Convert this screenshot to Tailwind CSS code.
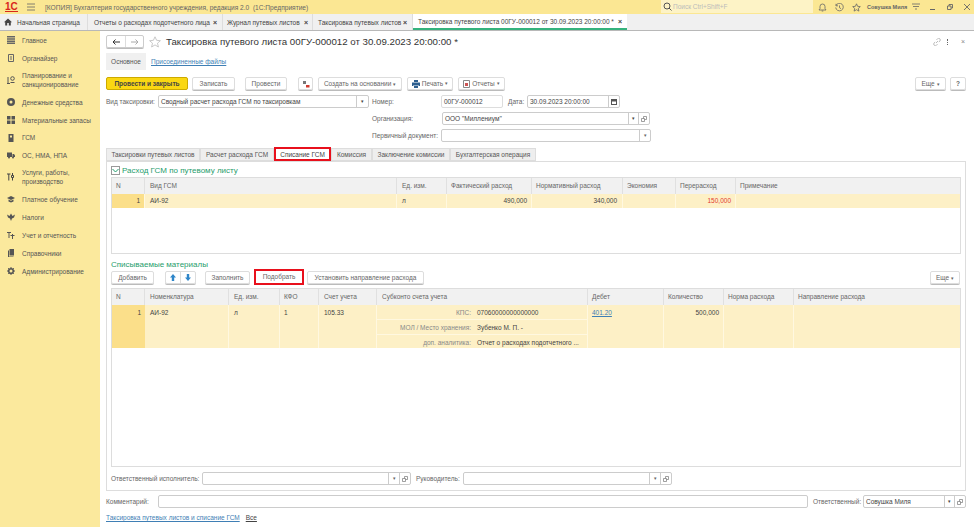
<!DOCTYPE html>
<html lang="ru">
<head>
<meta charset="UTF-8">
<title>Таксировка путевого листа</title>
<script src="https://cdn.jsdelivr.net/npm/@tailwindcss/browser@4"></script>
</head>
<body class="w-[974px] h-[527px] overflow-hidden bg-white font-['Liberation_Sans',sans-serif] text-[6.5px] leading-[9px] whitespace-nowrap text-[#555]">

<!-- title bar -->
<header class="h-[14px] bg-[#fbe793] flex items-center relative">
  <span class="ml-[5px] w-[13px] text-[10px] font-bold text-[#d8261c] border-b border-[#d8261c] leading-[9px]">1С</span>
  <svg class="ml-[9px] w-[8px] h-[8px]" viewBox="0 0 8 8" stroke="#666" stroke-width="0.8"><path d="M0 1h8M0 4h8M0 7h8"/></svg>
  <span class="ml-[10px] text-[6.600px] text-[#666]">[КОПИЯ] Бухгалтерия государственного учреждения, редакция 2.0&nbsp; (1С:Предприятие)</span>
  <div class="absolute left-[661px] top-0 w-[152px] h-[13px] bg-[#fdf3c6] flex items-center pl-[2px] text-[#bbb]">
    <svg class="w-[9px] h-[9px] mr-[1px]" viewBox="0 0 9 9" fill="none" stroke="#555" stroke-width="1"><circle cx="4" cy="4" r="3"/><path d="M6 6l2.500 2.500"/></svg>
    Поиск Ctrl+Shift+F
  </div>
  <div class="absolute left-[818px] top-0 h-[14px] flex items-center">
    <svg class="w-[9px] h-[9px]" viewBox="0 0 9 9" fill="none" stroke="#666" stroke-width="0.8"><path d="M1 7h7L7 5.500V3.500a2.500 2.500 0 0 0-5 0v2zM3.700 8h1.600"/></svg>
    <svg class="ml-[8px] w-[9px] h-[9px]" viewBox="0 0 9 9" fill="none" stroke="#666" stroke-width="0.8"><path d="M1 2.500A3.800 3.800 0 1 1 .7 4.500M1 .8v2h2M4.500 2.500v2.200l1.500 1"/></svg>
    <svg class="ml-[8px] w-[9px] h-[9px]" viewBox="0 0 9 9" fill="none" stroke="#666" stroke-width="0.8"><path d="M4.500.8l1.100 2.500 2.700.3-2 1.800.6 2.700-2.400-1.400-2.400 1.400.6-2.700-2-1.800 2.700-.3z"/></svg>
    <span class="ml-[6px] w-[41px] text-[5.500px] font-bold text-[#666]">Совушка Миля</span>
    <svg class="ml-[4px] w-[8px] h-[8px]" viewBox="0 0 8 8" stroke="#666" stroke-width="0.8"><path d="M0 1h8M1 3.500h6M3 6h2"/></svg>
    <span class="ml-[10px] w-[5px] h-[1px] mt-[4px] bg-[#666]"></span>
    <svg class="ml-[12px] w-[6px] h-[6px]" viewBox="0 0 6 6" fill="none" stroke="#666" stroke-width="0.9"><path d="M.5 2h3.500v3.500H.5zM2 2V.5h3.500V4H4"/></svg>
    <svg class="ml-[11px] w-[6px] h-[6px]" viewBox="0 0 6 6" stroke="#666" stroke-width="0.9"><path d="M0 0l6 6M6 0L0 6"/></svg>
  </div>
</header>

<!-- open windows -->
<nav class="h-[17px] bg-[#f0f0f0] border-b border-[#b8b8b8] flex">
  <div class="w-[88px] flex items-center pl-[4px] border-r border-[#ddd] text-[#444]">
    <svg class="w-[8px] h-[8px] mr-[5px]" viewBox="0 0 8 8" fill="#444"><path d="M4 .5L0 4.200h1.200V7.500h2V5h1.600v2.500h2V4.200H8z"/></svg>
    Начальная страница
  </div>
  <div class="w-[135px] flex items-center justify-between px-[5px] pl-[6px] border-r border-[#ddd] text-[#444]">Отчеты о расходах подотчетного лица <span class="font-bold text-[7px]">×</span></div>
  <div class="w-[90px] flex items-center justify-between px-[4px] border-r border-[#ddd] text-[#444]">Журнал путевых листов <span class="font-bold text-[7px]">×</span></div>
  <div class="w-[100px] flex items-center justify-between px-[5px] border-r border-[#ddd] text-[#444]">Таксировка путевых листов <span class="font-bold text-[7px]">×</span></div>
  <div class="w-[214px] h-[16px] bg-white border-b-2 border-[#35b27d] flex items-center justify-between px-[5px] text-[#444]">Таксировка путевого листа 00ГУ-000012 от 30.09.2023 20:00:00 * <span class="font-bold text-[7px]">×</span></div>
</nav>

<div class="flex h-[496px]">
  <!-- sections -->
  <aside class="w-[100px] bg-[#fbe99d] text-[#555]">
    <div class="h-[18px] flex items-center pl-[7px] gap-[7px]"><svg class="w-[8px] h-[8px] shrink-0" viewBox="0 0 8 8" fill="#666"><path d="M0 0h8v1.500H0zM0 2.200h8v1.500H0zM0 4.400h8v1.500H0zM0 6.500h8V8H0z"/></svg>Главное</div>
    <div class="h-[18px] flex items-center pl-[7px] gap-[7px]"><svg class="w-[8px] h-[8px] shrink-0" viewBox="0 0 8 8" fill="none" stroke="#666"><path d="M1.500.5h5v7h-5zM3 3h2M3 5h2"/></svg>Органайзер</div>
    <div class="h-[26px] flex items-center pl-[7px] gap-[7px]"><svg class="w-[8px] h-[8px] shrink-0" viewBox="0 0 8 8" fill="none" stroke="#555"><circle cx="5.500" cy="2.500" r="1.800"/><path d="M1 1v6.500M0 7.500h3M3.500 6.500h4"/></svg><span>Планирование и<br>санкционирование</span></div>
    <div class="h-[18px] flex items-center pl-[7px] gap-[7px]"><svg class="w-[8px] h-[8px] shrink-0" viewBox="0 0 8 8"><circle cx="4" cy="4" r="4" fill="#555"/><circle cx="4" cy="4" r="1.500" fill="#fbe99d"/></svg>Денежные средства</div>
    <div class="h-[18px] flex items-center pl-[7px] gap-[7px]"><svg class="w-[8px] h-[8px] shrink-0" viewBox="0 0 8 8" fill="#555"><path d="M0 0h3.500v3.500H0zM4.500 0H8v3.500H4.500zM0 4.500h3.500V8H0zM4.500 4.500H8V8H4.500z"/></svg>Материальные запасы</div>
    <div class="h-[17px] flex items-center pl-[7px] gap-[7px]"><svg class="w-[8px] h-[8px] shrink-0" viewBox="0 0 8 8" fill="#555"><path d="M1.500 0h5v8h-5zM3 1.500v2h2v-2z" fill-rule="evenodd"/></svg>ГСМ</div>
    <div class="h-[18px] flex items-center pl-[7px] gap-[7px]"><svg class="w-[8px] h-[8px] shrink-0" viewBox="0 0 8 8" fill="#555"><path d="M0 1.500h5v4.500H0zM5.500 3h1.500L8 4.500V6H5.500z"/><circle cx="2" cy="6.500" r="1"/><circle cx="6" cy="6.500" r="1"/></svg>ОС, НМА, НПА</div>
    <div class="h-[26px] flex items-center pl-[7px] gap-[7px]"><svg class="w-[8px] h-[8px] shrink-0" viewBox="0 0 8 8" stroke="#444" fill="none"><path d="M0 1h3.500M1.800 1v6.500M5.500 0v2M5.500 4.500v3M4.500 2.500h2v2h-2z"/></svg><span>Услуги, работы,<br>производство</span></div>
    <div class="h-[18px] flex items-center pl-[7px] gap-[7px]"><svg class="w-[8px] h-[8px] shrink-0" viewBox="0 0 8 8" fill="#555"><path d="M4 1L0 3l4 2 4-2zM1.500 4.500v2L4 7.500l2.500-1v-2L4 5.700z"/></svg>Платное обучение</div>
    <div class="h-[18px] flex items-center pl-[7px] gap-[7px]"><svg class="w-[8px] h-[8px] shrink-0" viewBox="0 0 8 8" fill="#555"><path d="M0 1.500L2.500 3 4 .5 5.500 3 8 1.500 7 4.500 5 5.500 4 8 3 5.500 1 4.500z"/></svg>Налоги</div>
    <div class="h-[18px] flex items-center pl-[7px] gap-[7px]"><svg class="w-[8px] h-[8px] shrink-0" viewBox="0 0 8 8" stroke="#555" fill="none"><path d="M0 1.500h4M2 1.500V7M3.500 4.500h4M5.500 3v5"/></svg>Учет и отчетность</div>
    <div class="h-[18px] flex items-center pl-[7px] gap-[7px]"><svg class="w-[8px] h-[8px] shrink-0" viewBox="0 0 8 8" fill="#555"><path d="M2.500 0H7v6.500H2.500zM1 1.500h1v6h4.500V8H1z"/></svg>Справочники</div>
    <div class="h-[18px] flex items-center pl-[7px] gap-[7px]"><svg class="w-[8px] h-[8px] shrink-0" viewBox="0 0 8 8" fill="none" stroke="#555" stroke-width="1.600"><circle cx="4" cy="4" r="2.300"/><path d="M4 0v1.500M4 6.500V8M0 4h1.500M6.500 4H8M1.200 1.200l1 1M5.800 5.800l1 1M6.800 1.200l-1 1M2.200 5.800l-1 1" stroke-width="1"/></svg>Администрирование</div>
  </aside>

  <!-- document form -->
  <main class="flex-1 pl-[6px] pr-[8px] pt-[4px]">
    <div class="h-[13px] flex items-center">
      <div class="w-[38px] h-[13px] border border-[#ccc] rounded-[2px] flex shadow-[0_1px_0_#bbb]">
        <span class="w-[19px] flex items-center justify-center border-r border-[#ddd]"><svg class="w-[8px] h-[6px]" viewBox="0 0 8 6" fill="none" stroke="#333"><path d="M8 3H1M3.500.5L1 3l2.500 2.500"/></svg></span>
        <span class="flex-1 flex items-center justify-center"><svg class="w-[8px] h-[6px]" viewBox="0 0 8 6" fill="none" stroke="#aaa"><path d="M0 3h7M4.500.5L7 3 4.500 5.500"/></svg></span>
      </div>
      <svg class="ml-[5px] w-[12px] h-[12px]" viewBox="0 0 12 12" fill="none" stroke="#bbb" stroke-width="0.8"><path d="M6 .8l1.600 3.500 3.800.4-2.900 2.500.9 3.800L6 8.900l-3.400 2.100.9-3.800L.6 4.700l3.800-.4z"/></svg>
      <h1 class="ml-[5px] text-[9.700px] leading-[13px] text-[#333]">Таксировка путевого листа 00ГУ-000012 от 30.09.2023 20:00:00 *</h1>
      <svg class="ml-auto w-[8px] h-[8px]" viewBox="0 0 8 8" fill="none" stroke="#aaa" stroke-width="0.8"><path d="M3 5l2-2M3.500 1.800l1-1a1.500 1.500 0 0 1 2.300 2.300l-1 1M4.500 6.200l-1 1a1.500 1.500 0 0 1-2.300-2.300l1-1"/></svg>
      <span class="ml-[6px] w-[1px] h-[6px] border-l border-dotted border-[#666]"></span>
      <span class="ml-[13px] mr-[1px] text-[7px] text-[#888]">×</span>
    </div>

    <div class="mt-[5px] h-[17px] flex items-center">
      <span class="w-[40px] h-[17px] bg-[#f0f0f0] flex items-center justify-center">Основное</span>
      <span class="ml-[5px] text-[#3f7fb5] underline">Присоединенные файлы</span>
    </div>

    <!-- command bar -->
    <div class="mt-[7px] h-[14px] flex text-[#666]">
      <button class="w-[82px] h-[13px] rounded-[2px] bg-[#fad712] border border-[#cdaa00] font-bold text-[#444]">Провести и закрыть</button>
      <button class="ml-[4px] w-[43px] h-[13px] border border-[#ddd] rounded-[2px] shadow-[0_1px_0_#bbb]">Записать</button>
      <button class="ml-[10px] w-[42px] h-[13px] border border-[#ddd] rounded-[2px] shadow-[0_1px_0_#bbb]">Провести</button>
      <button class="ml-[11px] w-[15px] h-[13px] border border-[#ddd] rounded-[2px] shadow-[0_1px_0_#bbb] flex items-center justify-center"><svg class="w-[8px] h-[8px]" viewBox="0 0 8 8"><path d="M1 1h3v3H1z" fill="#777"/><path d="M4 5h3.500v2.500H4z" fill="#d03a2f"/></svg></button>
      <button class="ml-[5px] w-[84px] h-[13px] border border-[#ddd] rounded-[2px] shadow-[0_1px_0_#bbb]">Создать на основании <span class="text-[5px]">▾</span></button>
      <button class="ml-[5px] w-[46px] h-[13px] border border-[#ddd] rounded-[2px] shadow-[0_1px_0_#bbb] flex items-center justify-center gap-[2px]"><svg class="w-[8px] h-[8px]" viewBox="0 0 8 8" fill="#2d5f8f"><path d="M2 0h4v2H2zM0 2.500h8v3.500H6.500V5h-5v1H0zM2 5.500h4V8H2z"/></svg>Печать <span class="text-[5px]">▾</span></button>
      <button class="ml-[5px] w-[47px] h-[13px] border border-[#ddd] rounded-[2px] shadow-[0_1px_0_#bbb] flex items-center justify-center gap-[2px]"><svg class="w-[7px] h-[8px]" viewBox="0 0 7 8"><path d="M.5.500h6v7h-6z" fill="#fff" stroke="#888"/><path d="M2 3h3v3H2z" fill="#c55"/></svg>Отчеты <span class="text-[5px]">▾</span></button>
      <button class="ml-auto w-[31px] h-[13px] border border-[#ddd] rounded-[2px] shadow-[0_1px_0_#bbb]">Еще <span class="text-[5px]">▾</span></button>
      <button class="ml-[4px] w-[16px] h-[13px] border border-[#ddd] rounded-[2px] shadow-[0_1px_0_#bbb] font-bold">?</button>
    </div>

    <!-- header fields -->
    <div class="mt-[4px] h-[13px] flex items-center text-[#666]">
      <span class="w-[52px]">Вид таксировки:</span>
      <div class="w-[211px] h-[13px] border border-[#ccc] rounded-[2px] flex items-center pl-[2px] text-[#444] bg-white">Сводный расчет расхода ГСМ по таксировкам<span class="ml-auto w-[12px] h-full border-l border-[#ccc] flex items-center justify-center text-[5px]">▾</span></div>
      <span class="ml-[3px] w-[69px]">Номер:</span>
      <div class="w-[62px] h-[13px] border border-[#ddd] rounded-[2px] flex items-center pl-[2px] text-[#444]">00ГУ-000012</div>
      <span class="ml-[5px] w-[19px]">Дата:</span>
      <div class="w-[93px] h-[13px] border border-[#ccc] rounded-[2px] flex items-center pl-[2px] text-[#444]">30.09.2023 20:00:00<span class="ml-auto w-[11px] h-full border-l border-[#ccc] flex items-center justify-center"><svg class="w-[6px] h-[6px]" viewBox="0 0 6 6" fill="#555"><path d="M0 0h6v6H0zM1 2.500V5h4V2.500z" fill-rule="evenodd"/></svg></span></div>
    </div>
    <div class="mt-[4px] h-[13px] flex items-center pl-[266px] text-[#666]">
      <span class="w-[70px]">Организация:</span>
      <div class="w-[208px] h-[13px] border border-[#ccc] rounded-[2px] flex items-center pl-[2px] text-[#444]">ООО "Миллениум"<span class="ml-auto w-[10px] h-full border-l border-[#ccc] flex items-center justify-center text-[5px]">▾</span><span class="w-[11px] h-full border-l border-[#ccc] flex items-center justify-center"><svg class="w-[6px] h-[6px]" viewBox="0 0 6 6" fill="none" stroke="#777" stroke-width="0.7"><path d="M.5 2.500h3v3h-3zM2.500 2.500v-2h3v3h-2"/></svg></span></div>
    </div>
    <div class="mt-[4px] h-[13px] flex items-center pl-[266px] text-[#666]">
      <span class="w-[69px]">Первичный документ:</span>
      <div class="w-[210px] h-[13px] border border-[#ccc] rounded-[2px] flex items-center"><span class="ml-auto w-[11px] h-full border-l border-[#ccc] flex items-center justify-center text-[5px]">▾</span></div>
    </div>

    <!-- page tabs -->
    <div class="mt-[5px] h-[14px] flex text-[#555]">
      <span class="w-[94px] h-[13px] mt-[1px] bg-[#eeeeee] border border-[#ddd] flex items-center justify-center">Таксировки путевых листов</span>
      <span class="w-[74px] h-[13px] mt-[1px] bg-[#eeeeee] border border-[#ddd] flex items-center justify-center">Расчет расхода ГСМ</span>
      <span class="w-[57px] h-[14px] bg-white border-2 border-[#e8101c] flex items-center justify-center text-[#444]">Списание ГСМ</span>
      <span class="w-[41px] h-[13px] mt-[1px] bg-[#eeeeee] border border-[#ddd] flex items-center justify-center">Комиссия</span>
      <span class="w-[78px] h-[13px] mt-[1px] bg-[#eeeeee] border border-[#ddd] flex items-center justify-center">Заключение комиссии</span>
      <span class="w-[86px] h-[13px] mt-[1px] bg-[#eeeeee] border border-[#ddd] flex items-center justify-center">Бухгалтерская операция</span>
    </div>

    <!-- tab page -->
    <section class="w-[860px] h-[330px] border border-[#ddd] px-[4px]">
      <div class="mt-[3px] h-[11px] flex items-center text-[8px] leading-[11px] text-[#1f9d6c]">
        <span class="w-[9px] h-[9px] border border-[#999] mr-[2px] flex items-center justify-center"><svg class="w-[7px] h-[5px]" viewBox="0 0 7 5" fill="none" stroke="#1f9d6c"><path d="M.5 1l3 3 3-3"/></svg></span>
        Расход ГСМ по путевому листу
      </div>

      <div class="mt-[1px] w-[850px] h-[77px] border border-[#ddd]">
        <div class="h-[16px] bg-[#f1f1f1] grid grid-cols-[33px_252px_50px_85px_91px_53px_60px_1fr] divide-x divide-[#e0e0e0] leading-[15px] text-[#666]">
          <span class="pl-[4px]">N</span><span class="pl-[5px]">Вид ГСМ</span><span class="pl-[5px]">Ед. изм.</span><span class="pl-[4px]">Фактический расход</span><span class="pl-[4px]">Нормативный расход</span><span class="pl-[4px]">Экономия</span><span class="pl-[4px]">Перерасход</span><span class="pl-[4px]">Примечание</span>
        </div>
        <div class="h-[14px] bg-[#fdf0c6] grid grid-cols-[33px_252px_50px_85px_91px_53px_60px_1fr] divide-x divide-[#fff8e0] leading-[14px] text-[#444]">
          <span class="bg-[#fbdf8a] text-right pr-[4px]">1</span><span class="pl-[5px]">АИ-92</span><span class="pl-[5px]">л</span><span class="text-right pr-[4px]">490,000</span><span class="text-right pr-[5px]">340,000</span><span></span><span class="text-right pr-[4px] text-[#e33b2e]">150,000</span><span></span>
        </div>
      </div>

      <div class="mt-[5px] h-[11px] text-[8px] leading-[11px] text-[#1f9d6c]">Списываемые материалы</div>
      <div class="h-[15px] flex items-center text-[#666]">
        <button class="w-[43px] h-[13px] border border-[#ddd] rounded-[2px] shadow-[0_1px_0_#bbb]">Добавить</button>
        <div class="ml-[11px] w-[31px] h-[13px] border border-[#ddd] rounded-[2px] shadow-[0_1px_0_#bbb] flex">
          <span class="w-[15px] border-r border-[#ddd] flex items-center justify-center"><svg class="w-[6px] h-[7px]" viewBox="0 0 6 7" fill="#2f86c9"><path d="M3 0l3 3.500H4.200V7H1.800V3.500H0z"/></svg></span>
          <span class="flex-1 flex items-center justify-center"><svg class="w-[6px] h-[7px]" viewBox="0 0 6 7" fill="#2f86c9"><path d="M3 7L0 3.500h1.800V0h2.400v3.500H6z"/></svg></span>
        </div>
        <button class="ml-[9px] w-[45px] h-[13px] border border-[#ddd] rounded-[2px] shadow-[0_1px_0_#bbb]">Заполнить</button>
        <button class="ml-[4px] w-[50px] h-[16px] -mt-[2px] border-2 border-[#e8101c]">Подобрать</button>
        <button class="ml-[3px] w-[117px] h-[13px] border border-[#ddd] rounded-[2px] shadow-[0_1px_0_#bbb]">Установить направление расхода</button>
        <button class="ml-auto mr-[1px] w-[30px] h-[13px] border border-[#ddd] rounded-[2px] shadow-[0_1px_0_#bbb]">Еще <span class="text-[5px]">▾</span></button>
      </div>

      <div class="mt-[3px] w-[850px] h-[179px] border border-[#ddd]">
        <div class="h-[16px] bg-[#f1f1f1] grid grid-cols-[33px_84px_51px_39px_58px_211px_76px_60px_70px_1fr] divide-x divide-[#e0e0e0] leading-[15px] text-[#666]">
          <span class="pl-[4px]">N</span><span class="pl-[5px]">Номенклатура</span><span class="pl-[5px]">Ед. изм.</span><span class="pl-[4px]">КФО</span><span class="pl-[5px]">Счет учета</span><span class="pl-[5px]">Субконто счета учета</span><span class="pl-[4px]">Дебет</span><span class="pl-[4px]">Количество</span><span class="pl-[4px]">Норма расхода</span><span class="pl-[4px]">Направление расхода</span>
        </div>
        <div class="h-[43px] bg-[#fdf0c6] grid grid-cols-[33px_84px_51px_39px_58px_97px_114px_76px_60px_70px_1fr] grid-rows-[14px_15px_14px] text-[#444]">
          <span class="row-span-3 bg-[#fbdf8a] text-right pr-[4px] pt-[3px]">1</span>
          <span class="row-span-3 pl-[5px] pt-[3px] border-r border-[#fff8e0]">АИ-92</span>
          <span class="row-span-3 pl-[5px] pt-[3px] border-r border-[#fff8e0]">л</span>
          <span class="row-span-3 pl-[4px] pt-[3px] border-r border-[#fff8e0]">1</span>
          <span class="row-span-3 pl-[5px] pt-[3px] border-r border-[#fff8e0]">105.33</span>
          <span class="text-right pr-[3px] pt-[3px] text-[#888]">КПС:</span>
          <span class="pl-[3px] pt-[3px] border-r border-[#fff8e0]">07060000000000000</span>
          <span class="row-span-3 pl-[4px] pt-[3px] text-[#3f7fb5] underline border-r border-[#fff8e0]">401.20</span>
          <span class="row-span-3 text-right pr-[4px] pt-[3px] border-r border-[#fff8e0]">500,000</span>
          <span class="row-span-3 border-r border-[#fff8e0]"></span>
          <span class="row-span-3"></span>
          <span class="text-right pr-[3px] pt-[3px] text-[#888] border-t border-[#fff8e0]">МОЛ / Место хранения:</span>
          <span class="pl-[3px] pt-[3px] border-t border-r border-[#fff8e0]">Зубенко М. П. -</span>
          <span class="text-right pr-[3px] pt-[3px] text-[#888] border-t border-[#fff8e0]">доп. аналитика:</span>
          <span class="pl-[3px] pt-[3px] border-t border-r border-[#fff8e0] overflow-hidden">Отчет о расходах подотчетного ...</span>
        </div>
      </div>

      <div class="mt-[5px] h-[13px] flex items-center text-[#666]">
        <span class="w-[91px]">Ответственный исполнитель:</span>
        <div class="w-[209px] h-[13px] border border-[#ccc] rounded-[2px] flex items-center"><span class="ml-auto w-[11px] h-full border-l border-[#ccc] flex items-center justify-center text-[5px]">▾</span><span class="w-[11px] h-full border-l border-[#ccc] flex items-center justify-center"><svg class="w-[6px] h-[6px]" viewBox="0 0 6 6" fill="none" stroke="#777" stroke-width="0.7"><path d="M.5 2.500h3v3h-3zM2.500 2.500v-2h3v3h-2"/></svg></span></div>
        <span class="ml-[5px] w-[47px]">Руководитель:</span>
        <div class="w-[209px] h-[13px] border border-[#ccc] rounded-[2px] flex items-center"><span class="ml-auto w-[11px] h-full border-l border-[#ccc] flex items-center justify-center text-[5px]">▾</span><span class="w-[11px] h-full border-l border-[#ccc] flex items-center justify-center"><svg class="w-[6px] h-[6px]" viewBox="0 0 6 6" fill="none" stroke="#777" stroke-width="0.7"><path d="M.5 2.500h3v3h-3zM2.500 2.500v-2h3v3h-2"/></svg></span></div>
      </div>
    </section>

    <!-- comment -->
    <div class="mt-[4px] h-[13px] flex items-center text-[#666]">
      <span class="w-[52px]">Комментарий:</span>
      <div class="w-[650px] h-[13px] border border-[#ccc] rounded-[2px]"></div>
      <span class="ml-[5px] w-[50px]">Ответственный:</span>
      <div class="w-[103px] h-[13px] border border-[#ccc] rounded-[2px] flex items-center pl-[2px] text-[#444]">Совушка Миля<span class="ml-auto w-[10px] h-full border-l border-[#ccc] flex items-center justify-center text-[5px]">▾</span><span class="w-[11px] h-full border-l border-[#ccc] flex items-center justify-center"><svg class="w-[6px] h-[6px]" viewBox="0 0 6 6" fill="none" stroke="#777" stroke-width="0.7"><path d="M.5 2.500h3v3h-3zM2.500 2.500v-2h3v3h-2"/></svg></span></div>
    </div>
    <div class="mt-[5px] flex">
      <a class="text-[#3f7fb5] underline">Таксировка путевых листов и списание ГСМ</a>
      <a class="ml-[6px] text-[#444] underline">Все</a>
    </div>
  </main>
</div>
</body>
</html>
